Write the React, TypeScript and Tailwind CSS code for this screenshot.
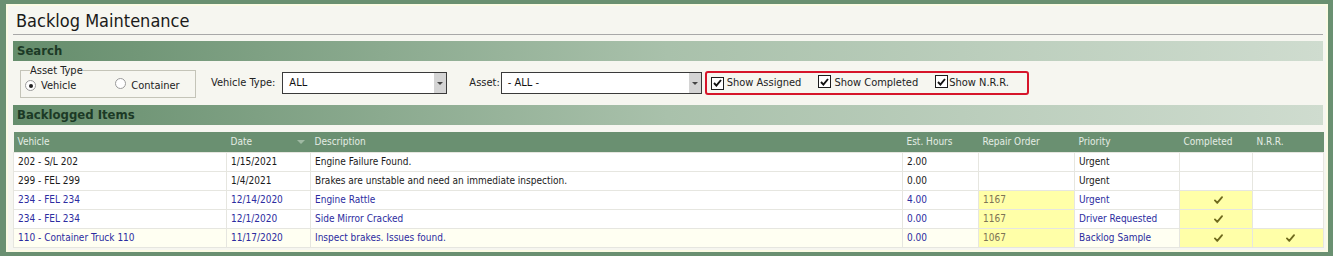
import React from "react";

type Row = {
  vehicle: string;
  date: string;
  desc: string;
  hours: string;
  ro: string;
  priority: string;
  completed: boolean;
  nrr: boolean;
  blue: boolean;
};

const rows: Row[] = [
  { vehicle: "202 - S/L 202", date: "1/15/2021", desc: "Engine Failure Found.", hours: "2.00", ro: "", priority: "Urgent", completed: false, nrr: false, blue: false },
  { vehicle: "299 - FEL 299", date: "1/4/2021", desc: "Brakes are unstable and need an immediate inspection.", hours: "0.00", ro: "", priority: "Urgent", completed: false, nrr: false, blue: false },
  { vehicle: "234 - FEL 234", date: "12/14/2020", desc: "Engine Rattle", hours: "4.00", ro: "1167", priority: "Urgent", completed: true, nrr: false, blue: true },
  { vehicle: "234 - FEL 234", date: "12/1/2020", desc: "Side Mirror Cracked", hours: "0.00", ro: "1167", priority: "Driver Requested", completed: true, nrr: false, blue: true },
  { vehicle: "110 - Container Truck 110", date: "11/17/2020", desc: "Inspect brakes. Issues found.", hours: "0.00", ro: "1067", priority: "Backlog Sample", completed: true, nrr: true, blue: true },
];

const font = { fontFamily: '"DejaVu Sans Condensed", "Liberation Sans", sans-serif' };

const Check = () => (
  <svg width="9" height="8" viewBox="0 0 10 9" className="inline-block">
    <path d="M1 5 L3.6 7.8 L9 1.2" stroke="#6f6a1e" strokeWidth="2" fill="none" strokeLinecap="round" strokeLinejoin="round" />
  </svg>
);

const Box = () => (
  <span className="inline-flex h-[13px] w-[13px] items-center justify-center border border-[#1c1c1c] bg-white">
    <svg width="9" height="8" viewBox="0 0 9 8">
      <path d="M1 4 L3.4 6.6 L8 1" stroke="#111" strokeWidth="1.9" fill="none" />
    </svg>
  </span>
);

const Radio = ({ on }: { on?: boolean }) => (
  <span className="inline-flex h-[11px] w-[11px] items-center justify-center rounded-full border border-[#9a9a9a] bg-white">
    {on && <span className="h-[4px] w-[4px] rounded-full bg-[#222]" />}
  </span>
);

const Select = ({ value, w }: { value: string; w: string }) => (
  <div className={`flex h-[22px] items-center border border-[#3a3a3a] bg-white ${w}`}>
    <span className="flex-1 pl-[6px] text-[11px] text-[#111]">{value}</span>
    <span className="flex h-full w-[12px] items-center justify-center bg-[#d4d4d4]">
      <span className="h-0 w-0 border-x-[3px] border-t-[3px] border-x-transparent border-t-[#444]" />
    </span>
  </div>
);

const Bar = ({ title }: { title: string }) => (
  <div className="flex h-[20px] items-center bg-gradient-to-r from-[#658d6c] via-[#a9c1ab] to-[#cfdccf] pl-[4px] text-[13px] font-bold text-[#1c3a26]">
    {title}
  </div>
);

export default function App() {
  const cols = ["w-[213px]", "w-[84px]", "w-[592px]", "w-[76px]", "w-[96px]", "w-[105px]", "w-[73px]", "w-[71px]"];
  return (
    <div className="h-[256px] w-[1333px] overflow-hidden bg-[#6a9071] pl-[6px] pr-[5px] pt-[4px]" style={font}>
      <div className="h-[248px] border-2 border-[#fbfbe4] bg-[#f6f6f0] pl-[5px] pr-[3px]">
        <div className="border-b border-[#a8a8a8] pb-[2px] pl-[3px] pt-[4px] text-[18px] leading-[22px] text-[#1a1a1a]">
          Backlog Maintenance
        </div>
        <div className="mt-[6px]">
          <Bar title="Search" />
        </div>
        <div className="flex h-[44px] items-center text-[11px] text-[#222]">
          <fieldset className="-mt-[3px] ml-[7px] h-[32px] w-[176px] border border-[#c4c4b8] px-[4px]">
            <legend className="ml-[5px] px-0 text-[11px] leading-[10px] text-[#222]">Asset Type</legend>
            <div className="flex items-center pt-[2px]">
              <Radio on />
              <span className="ml-[5px]">Vehicle</span>
              <span className="ml-[39px]"><Radio /></span>
              <span className="ml-[5px]">Container</span>
            </div>
          </fieldset>
          <span className="ml-[15px] mr-[7px]">Vehicle Type:</span>
          <Select value="ALL" w="w-[165px]" />
          <span className="ml-[22px] mr-[1px]">Asset:</span>
          <Select value="- ALL -" w="w-[201px]" />
          <div className="ml-[3px] flex h-[24px] w-[324px] items-center rounded-[3px] border-2 border-[#d6152a] pl-[4px]">
            <Box />
            <span className="ml-[3px]">Show Assigned</span>
            <span className="ml-[17px]"><Box /></span>
            <span className="ml-[3px]">Show Completed</span>
            <span className="ml-[17px]"><Box /></span>
            <span className="ml-[1px]">Show N.R.R.</span>
          </div>
        </div>
        <Bar title="Backlogged Items" />
        <table className="mt-[7px] w-[1310px] table-fixed border-collapse text-[10px]">
          <colgroup>
            {cols.map((c, i) => (
              <col key={i} className={c} />
            ))}
          </colgroup>
          <thead>
            <tr className="h-[20px] bg-[#6a9071] text-left font-normal text-[#e4ede4]">
              <th className="pl-[4px] font-normal">Vehicle</th>
              <th className="pl-[4px] font-normal">
                <div className="flex items-center justify-between pr-[6px]">
                  Date
                  <span className="h-0 w-0 border-x-[4px] border-t-[4px] border-x-transparent border-t-[#9fb9a3]" />
                </div>
              </th>
              <th className="pl-[4px] font-normal">Description</th>
              <th className="pl-[4px] font-normal">Est. Hours</th>
              <th className="pl-[4px] font-normal">Repair Order</th>
              <th className="pl-[4px] font-normal">Priority</th>
              <th className="pl-[4px] font-normal">Completed</th>
              <th className="pl-[4px] font-normal">N.R.R.</th>
            </tr>
          </thead>
          <tbody>
            {rows.map((r, i) => {
              const txt = r.blue ? "text-[#2c2ca0]" : "text-[#1a1a1a]";
              const last = i === rows.length - 1;
              const rowBg = last ? "bg-[#fffff2]" : "bg-white";
              const cell = "h-[19px] border border-[#e6e6e0] pl-[4px]";
              return (
                <tr key={i} className={`${rowBg} ${txt}`}>
                  <td className={cell}>{r.vehicle}</td>
                  <td className={cell}>{r.date}</td>
                  <td className={cell}>{r.desc}</td>
                  <td className={cell}>{r.hours}</td>
                  <td className={`${cell} ${r.ro ? "bg-[#ffffa8] text-[#7d7355]" : ""}`}>{r.ro}</td>
                  <td className={cell}>{r.priority}</td>
                  <td className={`${cell} text-center ${r.completed ? "bg-[#ffffa8]" : ""}`}>{r.completed && <Check />}</td>
                  <td className={`${cell} text-center ${r.nrr ? "bg-[#ffffa8]" : ""}`}>{r.nrr && <Check />}</td>
                </tr>
              );
            })}
          </tbody>
        </table>
      </div>
    </div>
  );
}
